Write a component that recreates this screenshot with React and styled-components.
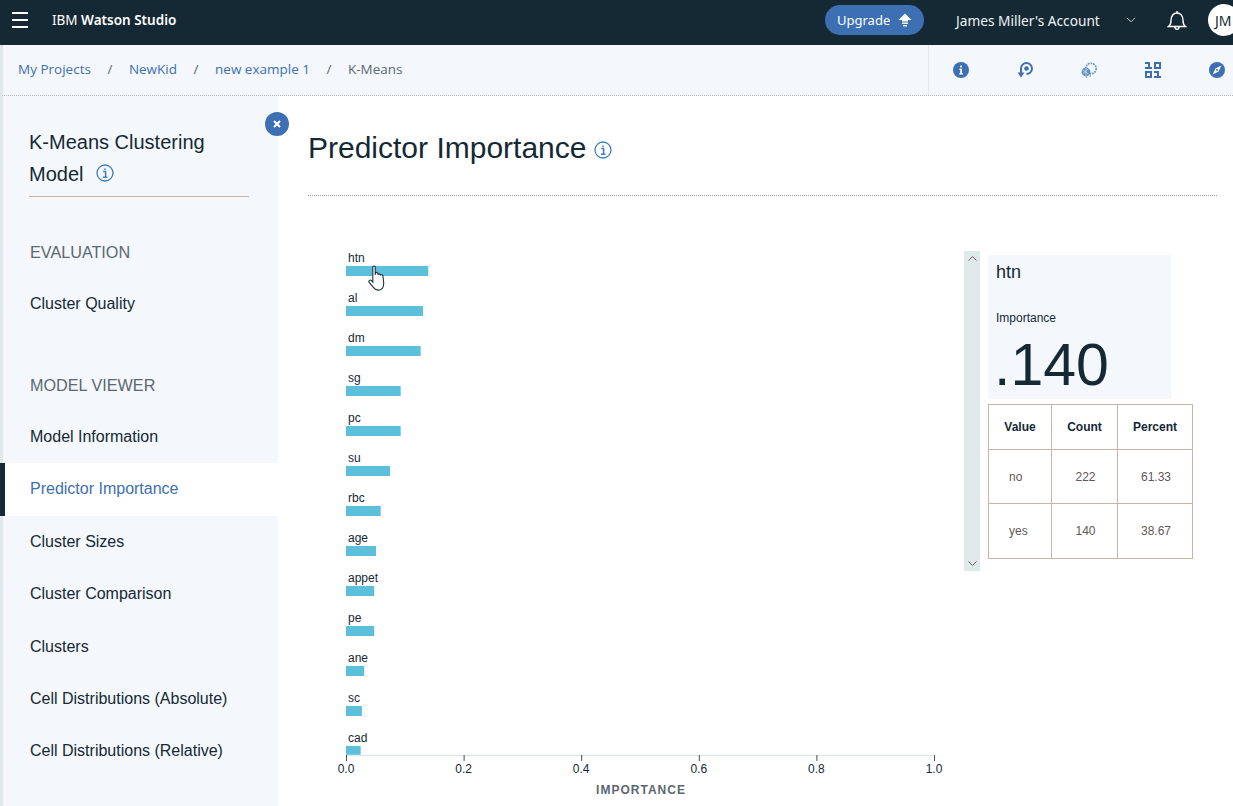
import React from "react";
import styled, { createGlobalStyle } from "styled-components";

const Global = createGlobalStyle`
  html, body { margin: 0; padding: 0; background: #fff; }
  body { font-family: "Liberation Sans", Arial, sans-serif; color: #152935; overflow: hidden; }
`;

const Page = styled.div`
  width: 1233px; height: 806px; overflow: hidden; display: flex; flex-direction: column; position: relative;
`;
const Header = styled.header`
  height: 45px; flex: none; box-sizing: border-box; padding-bottom: 5px; background: #152935; color: #fff; display: flex; align-items: center;
  font-family: "Noto Sans", Roboto, sans-serif;
`;
const Burger = styled.div`
  width: 16px; margin-left: 12px; display: flex; flex-direction: column; gap: 5px;
  & > i { display: block; height: 2px; background: #fff; }
`;
const Brand = styled.div`
  margin-left: 24px; font-size: 13.5px; color: #fff;
  & b { font-weight: 600; }
`;
const HeaderRight = styled.div`
  margin-left: auto; display: flex; align-items: center; width: 408px; flex: none;
`;
const Upgrade = styled.div`
  width: 99px; height: 30px; flex: none; border-radius: 15px; background: #3d70b2; display: flex; align-items: center;
  padding-left: 12px; box-sizing: border-box; gap: 8px; font-size: 13px; color: #fff;
`;
const Account = styled.div`
  margin-left: 32px; font-size: 13.7px; color: #eef4f4; width: 170px; flex: none; white-space: nowrap;
`;
const Chevron = styled.div`display: flex; width: 10px; flex: none;`;
const Bell = styled.div`margin-left: 31px; display: flex; width: 20px; flex: none;`;
const Avatar = styled.div`
  margin-left: 21px; width: 32px; height: 32px; border-radius: 50%; background: #fff; color: #152935; flex: none;
  display: flex; align-items: center; padding-left: 7px; box-sizing: border-box; font-size: 14px;
`;

const Crumbs = styled.nav`
  height: 51px; flex: none; box-sizing: border-box; background: #f4f7fb; display: flex; align-items: stretch;
  border-bottom: 1px dotted #b4b8b8; border-left: 3px solid #dfe9e9;
`;
const CrumbList = styled.div`
  flex: 1; display: flex; align-items: center; padding: 0 0 3px 15px; font-family: "Open Sans", "Noto Sans", sans-serif; font-size: 13.5px; color: #3d70b2;
`;
const Crumb = styled.span`color: ${p => p.$current ? "#5a6872" : "#3d70b2"}; white-space: nowrap;`;
const Sep = styled.span`color: #5a6872; width: 38px; text-align: center; white-space: nowrap;`;
const Tools = styled.div`
  width: 305px; flex: none; height: 50px; border-left: 1px solid #dfe9e9; box-sizing: border-box; display: flex; align-items: center;
  padding: 0 0 1px 24px; gap: 48px;
`;
const Tool = styled.div`width: 16px; height: 16px; display: flex; flex: none;`;

const Body = styled.div`flex: 1; display: flex; min-height: 0; position: relative;`;
const Sidebar = styled.aside`
  width: 278px; flex: none; background: #f4f7fb; box-sizing: border-box; position: relative;
  border-left: 3px solid #dfe9e9; padding-top: 30px;
`;
const Close = styled.div`
  position: absolute; left: 262px; top: 16px; width: 24px; height: 24px; border-radius: 50%; background: #3d70b2;
  display: flex; align-items: center; justify-content: center; z-index: 2;
`;
const ModelTitle = styled.h2`
  margin: 0 0 0 26px; width: 220px; font-size: 20px; font-weight: 400; line-height: 32px; color: #152935;
  padding-bottom: 6px; border-bottom: 1px solid #c9b3a3; display: block;
  & svg { margin-left: 13px; vertical-align: -1px; }
`;
const GroupLabel = styled.div`
  margin: ${p => p.$top}px 0 0 27px; font-size: 16.2px; line-height: 20px; color: #5a6872;
`;
const NavItem = styled.div`
  height: 52.4px; display: flex; align-items: center; font-size: 16px; box-sizing: border-box; padding-left: 27px;
  color: ${p => p.$active ? "#3d70b2" : "#152935"};
  margin-left: ${p => p.$active ? "-3px" : "0"};
  ${p => p.$active && "background: #fff; border-left: 5px solid #152935; padding-left: 25px;"}
`;
const NavGap = styled.div`height: ${p => p.$h}px;`;

const Main = styled.main`flex: 1; min-width: 0; padding: 0 16px 0 30px; position: relative;`;
const TitleRow = styled.div`
  height: 100px; box-sizing: border-box; border-bottom: 1px dotted #9aa0a0; display: flex; align-items: flex-start; padding-top: 32px; gap: 8px;
`;
const Title = styled.h1`margin: 0; font-size: 30px; font-weight: 400; line-height: 40px; color: #152935;`;
const TitleIcon = styled.div`display: flex; margin-top: 13px;`;
const Content = styled.div`display: flex; align-items: flex-start;`;
const ChartBox = styled.div`width: 656px; flex: none; padding-top: 55px; position: relative;`;
const Cursor = styled.div`position: absolute; left: 60px; top: 69px; display: flex;`;
const Side = styled.div`display: flex; margin-top: 55px; gap: 8px;`;
const Scroll = styled.div`
  width: 16px; height: 320px; background: #dfe9e9; display: flex; flex-direction: column; justify-content: space-between; align-items: center;
  padding: 5px 0; box-sizing: border-box;
`;
const Detail = styled.div`margin-top: 4px; width: 205px;`;
const Card = styled.div`width: 183px; height: 144px; background: #f4f7fb; box-sizing: border-box; padding: 7px 8px; `;
const CardName = styled.div`font-size: 18px; line-height: 20px;`;
const CardLabel = styled.div`font-size: 12px; line-height: 14px; margin-top: 29px; color: #152935;`;
const CardValue = styled.div`font-size: 59px; line-height: 62px; margin-top: 9px; margin-left: -2px; color: #152935;`;
const Table = styled.table`
  border-collapse: collapse; margin-top: 5px; width: 204px; table-layout: fixed; font-size: 12px;
  & th, & td { border: 1px solid #c9b3a3; padding: 0; text-align: center; }
  & th { font-weight: 700; height: 44px; color: #152935; }
  & td { height: 53px; color: #5f5757; padding-left: 2px; }
  & tr:last-child td { height: 54px; }
`;
const NoCell = styled.td`&& { text-align: left; padding-left: 20px; }`;

const bars = [["htn",.14],["al",.131],["dm",.127],["sg",.093],["pc",.093],["su",.075],["rbc",.059],["age",.051],["appet",.048],["pe",.048],["ane",.031],["sc",.027],["cad",.025]];

function Chart() {
  const x0 = 38, w = 588;
  const axisY = 504;
  return (
    <svg width="656" height="552" viewBox="0 0 656 552" style={{ display: "block" }}>
      {bars.map(([n, v], i) => (
        <g key={n}>
          <text x={x0 + 2} y={11 + i * 40} fontSize="12" fill="#152935" fontFamily="Liberation Sans">{n}</text>
          <rect x={x0} y={15 + i * 40} width={v * w} height={10} fill="#5dc0da" />
        </g>
      ))}
      <line x1={x0} x2={x0 + w} y1={axisY + .5} y2={axisY + .5} stroke="#dfe9e9" strokeWidth="1.5" />
      {[0, .2, .4, .6, .8, 1].map(t => (
        <g key={t}>
          <line x1={x0 + t * w + .5} x2={x0 + t * w + .5} y1={axisY} y2={axisY + 6} stroke="#42505a" />
          <text x={x0 + t * w} y={522} fontSize="12" textAnchor="middle" fill="#152935" fontFamily="Liberation Sans">{t.toFixed(1)}</text>
        </g>
      ))}
      <text x={333} y={543} fontSize="12" fontWeight="700" letterSpacing="1" textAnchor="middle" fill="#5a6872" fontFamily="Liberation Sans">IMPORTANCE</text>
    </svg>
  );
}

const InfoLine = ({ s = 18 }) => (
  <svg width={s} height={s} viewBox="0 0 18 18" fill="none">
    <circle cx="9" cy="9" r="8" stroke="#3d7fb8" strokeWidth="1.3" />
    <path d="M7.2 7.6H9.6V13M7 13.2H11.4M9 4.4V6" stroke="#3d7fb8" strokeWidth="1.5" />
  </svg>
);

const UpArrow = () => (
  <svg width="14" height="14" viewBox="0 0 14 14" fill="#fff">
    <path d="M7 .5 13.5 7H10V8.5H4V7H.5Z" />
    <rect x="4" y="9.5" width="6" height="1.4" />
    <rect x="5" y="12" width="4" height="1.4" />
  </svg>
);
const BellIcon = () => (
  <svg width="20" height="20" viewBox="0 0 20 20" fill="none" stroke="#fff" strokeWidth="1.4">
    <path d="M1.5 16.5C3.5 15 4 13.5 4 10.5 4 6 6.5 3 10 3s6 3 6 7.5c0 3 .5 4.5 2.5 6Z" />
    <path d="M8 17c0 1.5 1 2.2 2 2.2s2-.7 2-2.2" />
    <path d="M10 1v2" />
  </svg>
);
const ChevronIcon = () => (
  <svg width="10" height="6" viewBox="0 0 10 6" fill="none" stroke="#c8d2d2" strokeWidth="1"><path d="M1 .8 5 4.8 9 .8" /></svg>
);
const ToolInfo = () => (
  <svg width="16" height="16" viewBox="0 0 16 16"><circle cx="8" cy="8" r="8" fill="#3d70b2" /><path d="M6.4 6.8H9V11.2H10V12.4H6.2V11.2H7.2V8H6.4ZM7.2 3.6H9V5.4H7.2Z" fill="#fff" /></svg>
);
const ToolTurn = () => (
  <svg width="16" height="16" viewBox="0 0 16 16" fill="none">
    <path d="M4 11V6.5A5.5 5.5 0 1 1 9.5 12" stroke="#3d70b2" strokeWidth="2" />
    <circle cx="9.5" cy="6.5" r="2.3" fill="#3d70b2" />
    <path d="M.5 10.5H7.5L4 15.5Z" fill="#3d70b2" />
  </svg>
);
const ToolRope = () => (
  <svg width="16" height="16" viewBox="0 0 16 16" fill="none">
    <circle cx="10" cy="6.5" r="5.2" stroke="#6f9bc6" strokeWidth="1.7" strokeDasharray="1.8 .8" />
    <circle cx="5" cy="10" r="4.4" fill="#5f8fbe" />
    <path d="M1.5 8l6 4M2 11.5l5.5-5M5 6v8" stroke="#cfdcea" strokeWidth=".8" />
    <path d="M5.5 14.5V16M9.5 12.5 9 15" stroke="#8fa6bd" strokeWidth="1.2" />
  </svg>
);
const ToolGrid = () => (
  <svg width="16" height="16" viewBox="0 0 16 16" fill="#3d70b2" fillRule="evenodd">
    <path d="M0 0H5V5H7V7H0V5H3V2H0Z" />
    <path d="M9 0H16V7H9ZM11 2V5H14V2Z" />
    <path d="M0 9H7V16H0ZM2 11V14H5V11Z" />
    <path d="M9 9H14V14H16V16H9V14H12V11H9Z" />
  </svg>
);
const ToolCompass = () => (
  <svg width="16" height="16" viewBox="0 0 16 16"><circle cx="8" cy="8" r="8" fill="#3d70b2" /><path d="M12.4 3.6 9.6 9.6 3.6 12.4 6.4 6.4Z" fill="#fff" /><circle cx="8" cy="8" r="1" fill="#3d70b2" /></svg>
);
const HandCursor = () => (
  <svg width="19" height="26" viewBox="0 0 18 25" fill="#fff" stroke="#152935" strokeWidth="1">
    <path d="M4.5 2C4.5 .7 6.8 .7 6.8 2V9.5L7 7.5C8 6.8 9 7 9.3 8L9.5 9C10.5 8.2 11.6 8.5 11.8 9.6 12.8 9 14 9.3 14.2 10.5L15 17C15 20 14 22.5 12.5 23.5 10 24.5 7 24 5.5 22L.8 16.5C.2 15 2 13.8 3.2 15L4.5 16.5Z" />
  </svg>
);
const SmallX = () => (
  <svg width="8" height="8" viewBox="0 0 8 8" stroke="#fff" strokeWidth="2"><path d="M1 1 7 7M7 1 1 7" /></svg>
);
const ScrollUp = () => <svg width="9" height="5" viewBox="0 0 9 5" fill="none" stroke="#6a5f5a"><path d="M.5 4.5 4.5 .5 8.5 4.5" /></svg>;
const ScrollDown = () => <svg width="9" height="5" viewBox="0 0 9 5" fill="none" stroke="#6a5f5a"><path d="M.5 .5 4.5 4.5 8.5 .5" /></svg>;

export default function App() {
  return (
    <Page>
      <Global />
      <Header>
        <Burger><i /><i /><i /></Burger>
        <Brand>IBM <b>Watson Studio</b></Brand>
        <HeaderRight>
          <Upgrade>Upgrade <UpArrow /></Upgrade>
          <Account>James Miller's Account</Account>
          <Chevron><ChevronIcon /></Chevron>
          <Bell><BellIcon /></Bell>
          <Avatar>JM</Avatar>
        </HeaderRight>
      </Header>
      <Crumbs>
        <CrumbList>
          <Crumb>My Projects</Crumb><Sep>/</Sep>
          <Crumb>NewKid</Crumb><Sep>/</Sep>
          <Crumb>new example 1</Crumb><Sep>/</Sep>
          <Crumb $current>K-Means</Crumb>
        </CrumbList>
        <Tools>
          <Tool><ToolInfo /></Tool>
          <Tool><ToolTurn /></Tool>
          <Tool><ToolRope /></Tool>
          <Tool><ToolGrid /></Tool>
          <Tool><ToolCompass /></Tool>
        </Tools>
      </Crumbs>
      <Body>
        <Sidebar>
          <Close><SmallX /></Close>
          <ModelTitle>K-Means Clustering Model<InfoLine /></ModelTitle>
          <GroupLabel $top={45}>EVALUATION</GroupLabel>
          <NavGap $h={16} />
          <NavItem>Cluster Quality</NavItem>
          <GroupLabel $top={45}>MODEL VIEWER</GroupLabel>
          <NavGap $h={15.4} />
          <NavItem>Model Information</NavItem>
          <NavItem $active>Predictor Importance</NavItem>
          <NavItem>Cluster Sizes</NavItem>
          <NavItem>Cluster Comparison</NavItem>
          <NavItem>Clusters</NavItem>
          <NavItem>Cell Distributions (Absolute)</NavItem>
          <NavItem>Cell Distributions (Relative)</NavItem>
        </Sidebar>
        <Main>
          <TitleRow>
            <Title>Predictor Importance</Title>
            <TitleIcon><InfoLine /></TitleIcon>
          </TitleRow>
          <Content>
            <ChartBox>
              <Chart />
              <Cursor><HandCursor /></Cursor>
            </ChartBox>
            <Side>
              <Scroll><ScrollUp /><ScrollDown /></Scroll>
              <Detail>
                <Card>
                  <CardName>htn</CardName>
                  <CardLabel>Importance</CardLabel>
                  <CardValue>.140</CardValue>
                </Card>
                <Table>
                  <colgroup><col style={{ width: 63 }} /><col style={{ width: 66 }} /><col style={{ width: 75 }} /></colgroup>
                  <thead><tr><th>Value</th><th>Count</th><th>Percent</th></tr></thead>
                  <tbody>
                    <tr><NoCell>no</NoCell><td>222</td><td>61.33</td></tr>
                    <tr><NoCell>yes</NoCell><td>140</td><td>38.67</td></tr>
                  </tbody>
                </Table>
              </Detail>
            </Side>
          </Content>
        </Main>
      </Body>
    </Page>
  );
}
